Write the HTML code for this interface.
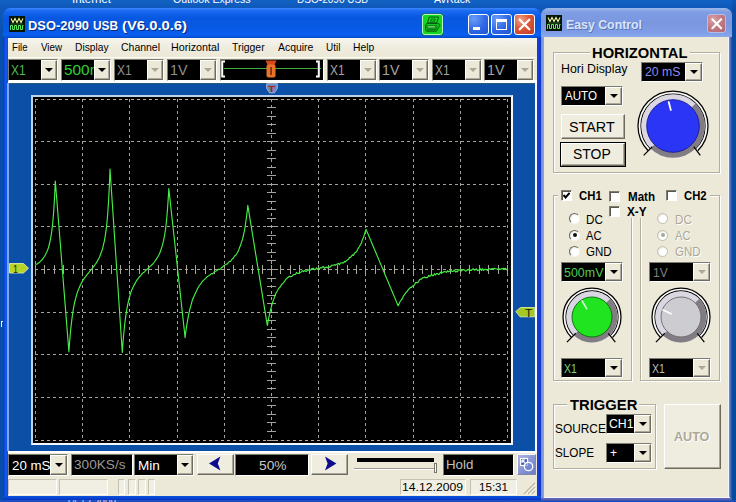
<!DOCTYPE html>
<html><head><meta charset="utf-8"><title>DSO-2090 USB</title>
<style>
html,body{margin:0;padding:0}
body{width:736px;height:502px;overflow:hidden;position:relative;background:#1b52c0;font-family:"Liberation Sans",sans-serif;}
.t{position:absolute;white-space:nowrap;transform-origin:0 50%;}

.cb{position:absolute;overflow:hidden;background:#000;box-sizing:border-box;border:1px solid;border-color:#7f7d70 #fff #fff #7f7d70;}
.cbb{position:absolute;right:0;top:0;bottom:0;background:#ece9d8;box-sizing:border-box;border:1px solid;border-color:#fff #6d6b60 #6d6b60 #fff;box-shadow:inset -1px -1px 0 #aca899;}
.arr{position:absolute;left:50%;top:50%;width:0;height:0;margin:-2px 0 0 -4px;border-left:4px solid transparent;border-right:4px solid transparent;border-top:4px solid #000;}
.arr.d{border-top-color:#aca899;}
.btn{position:absolute;background:#efede0;box-sizing:border-box;border:1px solid;border-color:#fff #6d6b60 #6d6b60 #fff;box-shadow:inset -1px -1px 0 #aca899;}
.grp{position:absolute;box-sizing:border-box;border:1px solid #b2af9e;box-shadow:inset 1px 1px 0 #fff, 1px 1px 0 #fff;}
.grp2{position:absolute;box-sizing:border-box;border:1px solid #d0d0bf;border-radius:3px;}
.chk{position:absolute;width:9px;height:9px;background:#fff;border:1px solid;border-color:#807e72 #fff #fff #807e72;box-shadow:inset 1px 1px 0 #5a584e;box-sizing:content-box;}
.rad{position:absolute;width:9px;height:9px;border-radius:50%;background:radial-gradient(circle at 60% 60%,#fff 45%,#d4d4c6);border:1px solid;border-color:#6a685e #f8f8f0 #f8f8f0 #6a685e;box-sizing:content-box;}
.rad.d{border-color:#c0c0b0;}
.sp{position:absolute;box-sizing:border-box;background:#f1efe4;border:1px solid;border-color:#c4c1b0 #fff #fff #c4c1b0;}

</style></head><body>
<div style="position:absolute;left:0px;top:0px;width:736px;height:502px;background:linear-gradient(#1262c4 0,#0e58b8 8px,#0850ac 40px,#084ea8 100%);"></div>
<span class="t " style="left:72.20px;top:-5.71px;font-size:11px;line-height:11px;color:#fff;transform:scaleX(1.0456);">Internet</span>
<span class="t " style="left:172.80px;top:-5.71px;font-size:11px;line-height:11px;color:#fff;transform:scaleX(0.9616);">Outlook Express</span>
<span class="t " style="left:296.80px;top:-6.31px;font-size:11px;line-height:11px;color:#fff;transform:scaleX(0.9144);">DSO-2090 USB</span>
<span class="t " style="left:434.30px;top:-6.11px;font-size:11px;line-height:11px;color:#fff;transform:scaleX(0.9602);">AvRack</span>
<div style="position:absolute;left:732px;top:0px;width:4px;height:502px;background:linear-gradient(#0e58b8 0,#0a4ca4 10px,#064a9e 100%);"></div>
<div style="position:absolute;left:0px;top:500px;width:736px;height:2px;background:#1a4fc2;"></div>
<span class="t " style="left:66.00px;top:497.54px;font-size:10px;line-height:10px;color:#c8d4f4;">14.12.2009</span>
<div style="position:absolute;left:1px;top:321px;width:1.2px;height:6px;background:#e8f0ff;"></div>
<div style="position:absolute;left:1px;top:321px;width:2.5px;height:1.2px;background:#e8f0ff;"></div>
<div style="position:absolute;left:3px;top:8px;width:538px;height:492px;background:#0a56e6;border-radius:8px 8px 0 0;"></div>
<div style="position:absolute;left:3px;top:8px;width:538px;height:30px;border-radius:8px 8px 0 0;background:linear-gradient(#3c88ff 0,#1868f0 3px,#0857e0 10px,#065ae6 22px,#0a5ff0 27px,#0349c8 30px);"></div>
<div style="position:absolute;left:3px;top:38px;width:5px;height:462px;background:linear-gradient(90deg,#0831d9,#1458ea 50%,#0a4fe0);"></div>
<div style="position:absolute;left:537px;top:38px;width:4px;height:462px;background:linear-gradient(90deg,#1440d4,#1234c8);"></div>
<div style="position:absolute;left:3px;top:496px;width:538px;height:4px;background:linear-gradient(#0855dd,#0a3fd0 60%,#0831c0);"></div>
<svg style="position:absolute;left:9px;top:16px" width="16" height="16" viewBox="0 0 16 16"><rect width="16" height="16" fill="#061406"/><path d="M2 2.5 L4 6.5 L6 2.5 L8 6.5 L10 2.5 L12 6.5 L14 2.5" stroke="#f4f8a0" stroke-width="1.1" fill="none"/><path d="M1.5 14 V9.5 H3.5 V13.5 H5.5 V9.5 H7.5 V13.5 H9.5 V9.5 H11.5 V13.5 H13.5 V9.5 H14.5" stroke="#58f058" stroke-width="1" fill="none"/><path d="M2 8 H14" stroke="#2a6a2a" stroke-width=".8"/></svg>
<span class="t " style="left:28.00px;top:18.57px;font-size:13.5px;line-height:13.5px;color:#fff;font-weight:bold;transform:scaleX(0.9564);text-shadow:1px 1px 0 #0a2a80;">DSO-2090</span>
<span class="t " style="left:93.40px;top:18.57px;font-size:13.5px;line-height:13.5px;color:#fff;font-weight:bold;transform:scaleX(0.8771);text-shadow:1px 1px 0 #0a2a80;">USB</span>
<span class="t " style="left:121.80px;top:18.57px;font-size:13.5px;line-height:13.5px;color:#fff;font-weight:bold;transform:scaleX(1.0966);text-shadow:1px 1px 0 #0a2a80;">(V6.0.0.6)</span>
<div style="position:absolute;left:421.5px;top:14px;width:21.5px;height:20.5px;background:#14d620;border:1px solid #b8f4c0;border-radius:3px;box-sizing:border-box;box-shadow:0 0 0 .6px #0c7a1a;"></div>
<svg style="position:absolute;left:421.5px;top:14px" width="21.6" height="20.5" viewBox="0 0 21.6 20.5"><g fill="none" stroke="#0a5a12" stroke-width="1"><path d="M7.3 3 H16.6 L14.8 8.8 H5.5 Z"/><path d="M9.3 5 H13.2 L12.6 7.2 H8.7 Z" stroke-width=".8"/><path d="M5 9.5 H15.5 Q18 9.5 18 11.5 Q18 13 16.5 13.5 L14.5 17.2 H4.8 Q3.4 16.8 3.6 15 V12 Q3.6 9.8 5 9.5 Z" fill="#12c41e"/><path d="M4.5 12 H15.5 M4.2 14 H15 M5 15.8 H14.4" stroke-width=".9"/><path d="M6 12.9 H13" stroke="#c8f8c8" stroke-width=".8"/></g></svg>
<div style="position:absolute;left:468px;top:14px;width:21px;height:21px;background:radial-gradient(circle at 25% 20%,#6c9cf8,#2f68e6 55%,#2254d0);border:1px solid #fff;border-radius:3px;box-sizing:border-box;"></div>
<div style="position:absolute;left:472.5px;top:26.5px;width:7.5px;height:3px;background:#fff;"></div>
<div style="position:absolute;left:491px;top:14px;width:21px;height:21px;background:radial-gradient(circle at 25% 20%,#6c9cf8,#2f68e6 55%,#2254d0);border:1px solid #fff;border-radius:3px;box-sizing:border-box;"></div>
<div style="position:absolute;left:496px;top:19px;width:11px;height:11px;box-sizing:border-box;border:1px solid #fff;border-top-width:3px;"></div>
<div style="position:absolute;left:514px;top:14px;width:21px;height:21px;background:radial-gradient(circle at 30% 25%,#f0a088,#dc5838 45%,#c23a20);border:1px solid #fff;border-radius:3px;box-sizing:border-box;"></div>
<svg style="position:absolute;left:514px;top:14px" width="21" height="21" viewBox="0 0 20 20"><path d="M5.5 5.5 L14.5 14.5 M14.5 5.5 L5.5 14.5" stroke="#fff" stroke-width="2.2" stroke-linecap="round"/></svg>
<div style="position:absolute;left:8px;top:38px;width:529px;height:21px;background:linear-gradient(#f6f5ee 0,#efecde 45%,#ebe8d7 100%);"></div>
<div style="position:absolute;left:8px;top:57px;width:529px;height:1.5px;background:#fdfdf8;"></div>
<span class="t " style="left:12.30px;top:41.69px;font-size:11px;line-height:11px;color:#000;transform:scaleX(0.8745);">File</span>
<span class="t " style="left:41.00px;top:41.69px;font-size:11px;line-height:11px;color:#000;transform:scaleX(0.8882);">View</span>
<span class="t " style="left:74.50px;top:41.69px;font-size:11px;line-height:11px;color:#000;transform:scaleX(0.9288);">Display</span>
<span class="t " style="left:120.50px;top:41.69px;font-size:11px;line-height:11px;color:#000;transform:scaleX(0.9518);">Channel</span>
<span class="t " style="left:171.00px;top:41.69px;font-size:11px;line-height:11px;color:#000;transform:scaleX(0.9754);">Horizontal</span>
<span class="t " style="left:232.30px;top:41.69px;font-size:11px;line-height:11px;color:#000;transform:scaleX(0.9468);">Trigger</span>
<span class="t " style="left:278.00px;top:41.69px;font-size:11px;line-height:11px;color:#000;transform:scaleX(0.9492);">Acquire</span>
<span class="t " style="left:326.00px;top:41.69px;font-size:11px;line-height:11px;color:#000;transform:scaleX(0.9063);">Util</span>
<span class="t " style="left:352.60px;top:41.69px;font-size:11px;line-height:11px;color:#000;transform:scaleX(0.9371);">Help</span>
<div style="position:absolute;left:8px;top:58px;width:529px;height:23px;background:#ece9d8;"></div>
<div style="position:absolute;left:8px;top:80px;width:529px;height:2.5px;background:#fff;"></div>
<div style="position:absolute;left:8px;top:82.5px;width:529px;height:1.5px;background:#2a5a78;"></div>
<div class="cb" style="left:7.5px;top:59px;width:50px;height:21.5px;background:#000"><span class="t " style="left:2.00px;top:2.73px;font-size:14.5px;line-height:14.5px;color:#4fb84f;transform:scaleX(0.8232);">X1</span><div class="cbb" style="width:16px"><div class="arr"></div></div></div>
<div class="cb" style="left:61px;top:59px;width:50px;height:21.5px;background:#000"><span class="t " style="left:2.00px;top:2.73px;font-size:14.5px;line-height:14.5px;color:#30d030;transform:scaleX(1.0615);">500m</span><div class="cbb" style="width:16px"><div class="arr"></div></div></div>
<div class="cb" style="left:114px;top:59px;width:50px;height:21.5px;background:#000"><span class="t " style="left:2.00px;top:2.73px;font-size:14.5px;line-height:14.5px;color:#909090;transform:scaleX(0.8232);">X1</span><div class="cbb" style="width:16px"><div class="arr d"></div></div></div>
<div class="cb" style="left:167px;top:59px;width:50px;height:21.5px;background:#000"><span class="t " style="left:2.00px;top:2.73px;font-size:14.5px;line-height:14.5px;color:#909090;transform:scaleX(0.9811);">1V</span><div class="cbb" style="width:16px"><div class="arr d"></div></div></div>
<div class="cb" style="left:326.5px;top:59px;width:50px;height:21.5px;background:#000"><span class="t " style="left:2.00px;top:2.73px;font-size:14.5px;line-height:14.5px;color:#a4a4a4;transform:scaleX(0.8232);">X1</span><div class="cbb" style="width:16px"><div class="arr d"></div></div></div>
<div class="cb" style="left:379.0px;top:59px;width:50px;height:21.5px;background:#000"><span class="t " style="left:2.00px;top:2.73px;font-size:14.5px;line-height:14.5px;color:#a4a4a4;transform:scaleX(0.9811);">1V</span><div class="cbb" style="width:16px"><div class="arr d"></div></div></div>
<div class="cb" style="left:431.5px;top:59px;width:50px;height:21.5px;background:#000"><span class="t " style="left:2.00px;top:2.73px;font-size:14.5px;line-height:14.5px;color:#a4a4a4;transform:scaleX(0.8232);">X1</span><div class="cbb" style="width:16px"><div class="arr d"></div></div></div>
<div class="cb" style="left:484.0px;top:59px;width:50px;height:21.5px;background:#000"><span class="t " style="left:2.00px;top:2.73px;font-size:14.5px;line-height:14.5px;color:#a4a4a4;transform:scaleX(0.9811);">1V</span><div class="cbb" style="width:16px"><div class="arr d"></div></div></div>
<div style="position:absolute;left:219.5px;top:59px;width:104.5px;height:21.5px;background:#000;box-sizing:border-box;border:1px solid;border-color:#7f7d70 #fff #fff #7f7d70;"></div>
<div style="position:absolute;left:224px;top:68px;width:97px;height:1px;background:#3fae3f;"></div>
<svg style="position:absolute;left:220px;top:59px" width="104" height="21" viewBox="0 0 104 21"><path d="M5 2.5 H2.2 V17.5 H5 M96 2.5 H98.8 V17.5 H96" stroke="#fff" stroke-width="2" fill="none"/><path d="M45.5 1.5 H56.5 L54.5 6 H47.5 Z" fill="#d84818"/><rect x="46.5" y="5.5" width="9" height="13" rx="2" fill="#e8742c"/><rect x="50.4" y="8" width="1.3" height="8" fill="#5a1804"/></svg>
<div style="position:absolute;left:8px;top:84px;width:529px;height:367px;background:#0c4fa6;"></div>
<div style="position:absolute;left:7px;top:83px;width:1.5px;height:368px;background:#7aa8e8;"></div>
<div style="position:absolute;left:535px;top:83px;width:2px;height:368px;background:#f4f8ff;"></div>
<svg style="position:absolute;left:266px;top:83px" width="12" height="10.5" viewBox="0 0 12 10.5"><path d="M.7 .7 H11.3 V5.5 L8.5 9.8 H3.5 L.7 5.5 Z" fill="#6a88c0" stroke="#a8bce0" stroke-width=".9"/></svg>
<span class="t " style="left:268.40px;top:83.96px;font-size:9.5px;line-height:9.5px;color:#b02408;font-weight:bold;transform:scaleX(1.2409);">T</span>
<svg style="position:absolute;left:8.5px;top:263px" width="21" height="11" viewBox="0 0 21 11"><path d="M.5 .5 H14.5 L19.5 5.2 L14.5 10 H.5 Z" fill="#b8d428" stroke="#dcecA0" stroke-width=".9"/></svg>
<span class="t " style="left:12.60px;top:263.71px;font-size:10.5px;line-height:10.5px;color:#1a2a00;transform:scaleX(0.8563);">1</span>
<svg style="position:absolute;left:515px;top:307px" width="20" height="11" viewBox="0 0 20 11"><path d="M19.8 .5 H5.5 L.8 4.5 L5 9.8 H19.8 Z" fill="#a4c824" stroke="#d8e8a0" stroke-width=".9"/></svg>
<span class="t " style="left:524.80px;top:307.71px;font-size:10.5px;line-height:10.5px;color:#141c00;transform:scaleX(1.1539);">T</span>
<div style="position:absolute;left:31px;top:95px;width:482px;height:350px;background:#000;border:2px solid;border-color:#bcd4ec #f4f8ff #f4f8ff #bcd4ec;box-sizing:border-box;"></div>
<svg style="position:absolute;left:35px;top:99px" width="473" height="342" viewBox="0 0 473 342"><path d="M0 0.5 H473 M0 341.5 H473" stroke="#c0ac94" stroke-width="1" stroke-dasharray="3 3" fill="none" shape-rendering="crispEdges"/><path d="M0.5 0 V342 M47.5 0 V342 M94.5 0 V342 M142.5 0 V342 M189.5 0 V342 M236.5 0 V342 M283.5 0 V342 M330.5 0 V342 M378.5 0 V342 M425.5 0 V342 M472.5 0 V342 M0 42.5 H473 M0 85.5 H473 M0 127.5 H473 M0 170.5 H473 M0 213.5 H473 M0 255.5 H473 M0 298.5 H473" stroke="#a4a298" stroke-width="1" stroke-dasharray="3 3" fill="none" shape-rendering="crispEdges"/><path d="M232.0 0.5 H241.0 M232.0 8.5 H241.0 M232.0 17.5 H241.0 M232.0 25.5 H241.0 M232.0 34.5 H241.0 M232.0 42.5 H241.0 M232.0 51.5 H241.0 M232.0 59.5 H241.0 M232.0 68.5 H241.0 M232.0 76.5 H241.0 M232.0 85.5 H241.0 M232.0 93.5 H241.0 M232.0 102.5 H241.0 M232.0 110.5 H241.0 M232.0 119.5 H241.0 M232.0 127.5 H241.0 M232.0 136.5 H241.0 M232.0 144.5 H241.0 M232.0 153.5 H241.0 M232.0 161.5 H241.0 M232.0 170.5 H241.0 M232.0 179.5 H241.0 M232.0 187.5 H241.0 M232.0 196.5 H241.0 M232.0 204.5 H241.0 M232.0 213.5 H241.0 M232.0 221.5 H241.0 M232.0 230.5 H241.0 M232.0 238.5 H241.0 M232.0 247.5 H241.0 M232.0 255.5 H241.0 M232.0 264.5 H241.0 M232.0 272.5 H241.0 M232.0 281.5 H241.0 M232.0 289.5 H241.0 M232.0 298.5 H241.0 M232.0 306.5 H241.0 M232.0 315.5 H241.0 M232.0 323.5 H241.0 M232.0 332.5 H241.0 M232.0 341.5 H241.0 M0.5 166.0 V175.0 M9.5 166.0 V175.0 M19.5 166.0 V175.0 M28.5 166.0 V175.0 M38.5 166.0 V175.0 M47.5 166.0 V175.0 M57.5 166.0 V175.0 M66.5 166.0 V175.0 M76.5 166.0 V175.0 M85.5 166.0 V175.0 M94.5 166.0 V175.0 M104.5 166.0 V175.0 M113.5 166.0 V175.0 M123.5 166.0 V175.0 M132.5 166.0 V175.0 M142.5 166.0 V175.0 M151.5 166.0 V175.0 M160.5 166.0 V175.0 M170.5 166.0 V175.0 M179.5 166.0 V175.0 M189.5 166.0 V175.0 M198.5 166.0 V175.0 M208.5 166.0 V175.0 M217.5 166.0 V175.0 M227.5 166.0 V175.0 M236.5 166.0 V175.0 M245.5 166.0 V175.0 M255.5 166.0 V175.0 M264.5 166.0 V175.0 M274.5 166.0 V175.0 M283.5 166.0 V175.0 M293.5 166.0 V175.0 M302.5 166.0 V175.0 M312.5 166.0 V175.0 M321.5 166.0 V175.0 M330.5 166.0 V175.0 M340.5 166.0 V175.0 M349.5 166.0 V175.0 M359.5 166.0 V175.0 M368.5 166.0 V175.0 M378.5 166.0 V175.0 M387.5 166.0 V175.0 M396.5 166.0 V175.0 M406.5 166.0 V175.0 M415.5 166.0 V175.0 M425.5 166.0 V175.0 M434.5 166.0 V175.0 M444.5 166.0 V175.0 M453.5 166.0 V175.0 M463.5 166.0 V175.0 M472.5 166.0 V175.0" stroke="#a8a698" stroke-width="1" fill="none" shape-rendering="crispEdges"/><polyline points="0.5,165.8 1.5,165.2 2.5,164.8 3.5,163.8 4.5,163.3 5.5,162.3 6.5,161.2 7.5,160.3 8.5,158.7 9.5,157.5 10.5,155.5 11.5,153.5 12.5,151.3 13.5,148.6 14.5,144.5 15.5,140.0 16.5,134.2 17.5,126.4 18.5,115.1 19.5,99.3 20.3,82.0 20.5,84.5 21.5,97.1 22.5,109.6 23.5,122.2 24.5,134.7 25.5,147.3 26.5,159.9 27.5,172.4 28.5,185.0 29.5,197.5 30.5,210.1 31.5,222.7 32.5,235.2 33.5,247.8 33.9,252.8 34.5,244.4 35.5,232.3 36.5,223.4 37.5,215.5 38.5,209.2 39.5,204.0 40.5,199.8 41.5,196.4 42.5,192.9 43.5,190.4 44.5,188.0 45.5,185.7 46.5,183.9 47.5,181.9 48.5,180.3 49.5,178.9 50.5,177.8 51.5,176.4 52.5,175.1 53.5,174.0 54.5,172.7 55.5,171.4 56.5,170.5 57.5,169.2 58.5,167.6 59.5,166.5 60.5,165.0 61.5,163.7 62.5,161.9 63.5,159.8 64.5,158.2 65.5,155.3 66.5,152.8 67.5,149.9 68.5,145.7 69.5,141.3 70.5,135.2 71.5,127.9 72.5,117.7 73.5,103.4 74.5,83.5 75.0,70.0 75.5,77.5 76.5,92.4 77.5,107.3 78.5,122.2 79.5,137.1 80.5,152.0 81.5,166.9 82.5,181.8 83.5,196.7 84.5,211.7 85.5,226.6 86.5,241.5 87.3,253.4 87.5,250.0 88.5,237.5 89.5,227.2 90.5,218.9 91.5,212.1 92.5,206.7 93.5,202.2 94.5,198.0 95.5,194.7 96.5,191.5 97.5,189.4 98.5,187.2 99.5,185.4 100.5,183.6 101.5,181.7 102.5,180.3 103.5,179.2 104.5,177.6 105.5,176.7 106.5,175.5 107.5,174.4 108.5,173.4 109.5,172.9 110.5,171.6 111.5,170.8 112.5,169.9 113.5,169.3 114.5,167.9 115.5,167.1 116.5,166.2 117.5,165.3 118.5,164.2 119.5,163.0 120.5,161.3 121.5,159.9 122.5,158.3 123.5,156.8 124.5,154.8 125.5,152.0 126.5,149.2 127.5,145.9 128.5,141.9 129.5,136.9 130.5,130.5 131.5,121.8 132.5,110.3 133.5,95.1 133.8,89.5 134.5,95.9 135.5,105.1 136.5,114.2 137.5,123.3 138.5,132.5 139.5,141.6 140.5,150.8 141.5,159.9 142.5,169.1 143.5,178.2 144.5,187.4 145.5,196.5 146.5,205.7 147.5,214.8 148.5,224.0 149.5,233.1 150.1,238.6 150.5,234.9 151.5,227.8 152.5,221.9 153.5,216.4 154.5,211.7 155.5,207.8 156.5,204.3 157.5,200.4 158.5,198.6 159.5,196.0 160.5,193.9 161.5,191.9 162.5,189.6 163.5,188.0 164.5,186.1 165.5,185.4 166.5,183.5 167.5,182.3 168.5,181.4 169.5,180.4 170.5,179.6 171.5,178.4 172.5,177.5 173.5,176.9 174.5,176.1 175.5,175.7 176.5,174.5 177.5,174.9 178.5,173.9 179.5,172.7 180.5,172.2 181.5,171.7 182.5,171.1 183.5,170.2 184.5,170.4 185.5,170.0 186.5,168.7 187.5,168.1 188.5,166.9 189.5,166.3 190.5,165.8 191.5,165.0 192.5,164.9 193.5,163.3 194.5,162.3 195.5,162.5 196.5,161.0 197.5,159.5 198.5,158.9 199.5,157.0 200.5,156.3 201.5,155.3 202.5,153.5 203.5,151.4 204.5,148.7 205.5,146.3 206.5,143.1 207.5,140.4 208.5,136.0 209.5,131.5 210.5,125.0 211.5,117.8 212.5,109.8 212.8,106.4 213.5,110.7 214.5,116.9 215.5,123.0 216.5,129.2 217.5,135.3 218.5,141.5 219.5,147.6 220.5,153.8 221.5,159.9 222.5,166.1 223.5,172.2 224.5,178.4 225.5,184.6 226.5,190.7 227.5,196.9 228.5,203.0 229.5,209.2 230.5,215.3 231.5,221.5 232.3,226.4 232.5,225.7 233.5,220.1 234.5,215.4 235.5,211.2 236.5,207.4 237.5,203.5 238.5,200.9 239.5,198.1 240.5,195.3 241.5,193.2 242.5,191.5 243.5,189.7 244.5,188.6 245.5,187.5 246.5,185.5 247.5,184.8 248.5,183.7 249.5,182.7 250.5,180.8 251.5,179.6 252.5,178.8 253.5,178.0 254.5,177.3 255.5,177.6 256.5,177.6 257.5,176.9 258.5,175.6 259.5,175.5 260.5,175.4 261.5,173.4 262.5,174.3 263.5,174.5 264.5,173.9 265.5,173.5 266.5,172.6 267.5,171.6 268.5,172.7 269.5,171.5 270.5,172.3 271.5,172.4 272.5,171.0 273.5,170.8 274.5,171.8 275.5,171.1 276.5,169.7 277.5,169.5 278.5,169.3 279.5,170.8 280.5,170.5 281.5,168.9 282.5,170.2 283.5,170.4 284.5,169.5 285.5,168.7 286.5,169.0 287.5,167.9 288.5,167.5 289.5,169.4 290.5,168.5 291.5,168.1 292.5,168.8 293.5,167.5 294.5,168.2 295.5,167.9 296.5,166.4 297.5,166.2 298.5,166.1 299.5,165.7 300.5,166.2 301.5,165.2 302.5,165.2 303.5,164.3 304.5,165.6 305.5,164.0 306.5,163.9 307.5,163.7 308.5,164.0 309.5,162.4 310.5,163.0 311.5,161.5 312.5,160.9 313.5,160.2 314.5,158.4 315.5,158.5 316.5,157.1 317.5,155.8 318.5,156.5 319.5,154.0 320.5,153.5 321.5,152.7 322.5,150.9 323.5,148.8 324.5,147.5 325.5,145.6 326.5,144.0 327.5,140.2 328.5,138.6 329.5,135.1 330.5,132.0 331.1,130.4 331.5,131.4 332.5,133.7 333.5,136.1 334.5,138.5 335.5,140.9 336.5,143.3 337.5,145.7 338.5,148.0 339.5,150.4 340.5,152.8 341.5,155.2 342.5,157.6 343.5,160.0 344.5,162.4 345.5,164.7 346.5,167.1 347.5,169.5 348.5,171.9 349.5,174.3 350.5,176.7 351.5,179.0 352.5,181.4 353.5,183.8 354.5,186.2 355.5,188.6 356.5,191.0 357.5,193.3 358.5,195.7 359.5,198.1 360.5,200.5 361.5,202.9 362.5,205.3 363.1,206.7 363.5,206.4 364.5,203.8 365.5,202.0 366.5,200.7 367.5,199.4 368.5,196.8 369.5,195.7 370.5,194.1 371.5,192.9 372.5,192.0 373.5,190.4 374.5,189.5 375.5,188.4 376.5,188.4 377.5,187.0 378.5,186.5 379.5,185.9 380.5,183.6 381.5,183.5 382.5,183.7 383.5,182.8 384.5,180.7 385.5,180.1 386.5,180.2 387.5,178.9 388.5,178.7 389.5,177.9 390.5,178.8 391.5,178.6 392.5,178.5 393.5,176.4 394.5,177.3 395.5,176.9 396.5,175.4 397.5,176.7 398.5,176.6 399.5,174.7 400.5,176.0 401.5,174.6 402.5,174.5 403.5,175.4 404.5,174.9 405.5,173.2 406.5,173.6 407.5,173.6 408.5,173.0 409.5,172.5 410.5,172.7 411.5,173.4 412.5,171.7 413.5,172.8 414.5,172.4 415.5,171.3 416.5,171.9 417.5,172.5 418.5,172.1 419.5,171.0 420.5,173.0 421.5,172.4 422.5,172.8 423.5,170.8 424.5,171.1 425.5,170.5 426.5,172.0 427.5,170.9 428.5,170.5 429.5,171.1 430.5,172.1 431.5,171.8 432.5,170.6 433.5,170.3 434.5,171.9 435.5,171.1 436.5,171.4 437.5,170.0 438.5,169.9 439.5,171.2 440.5,170.6 441.5,169.8 442.5,171.7 443.5,171.0 444.5,171.3 445.5,169.7 446.5,171.4 447.5,169.7 448.5,171.4 449.5,170.5 450.5,170.2 451.5,170.6 452.5,171.5 453.5,170.0 454.5,169.7 455.5,170.5 456.5,169.9 457.5,169.6 458.5,169.7 459.5,169.4 460.5,169.7 461.5,170.0 462.5,170.0 463.5,170.9 464.5,169.9 465.5,170.4 466.5,169.6 467.5,170.0 468.5,169.3 469.5,169.8 470.5,169.3 471.5,170.8 472.5,170.4" stroke="#46ee46" stroke-width="1.15" fill="none" stroke-linejoin="round"/></svg>
<div style="position:absolute;left:8px;top:451px;width:529px;height:27px;background:#ece9d8;"></div>
<div style="position:absolute;left:8px;top:451px;width:529px;height:2px;background:#fff;"></div>
<div class="cb" style="left:7.5px;top:454px;width:60.5px;height:21.5px;background:#000"><span class="t " style="left:3.00px;top:3.60px;font-size:13px;line-height:13px;color:#fff;transform:scaleX(1.0248);">20 mS</span><div class="cbb" style="width:17px"><div class="arr"></div></div></div>
<div style="position:absolute;left:71px;top:454px;width:61.5px;height:21.5px;background:#000;box-sizing:border-box;border:1px solid;border-color:#7f7d70 #fff #fff #7f7d70;"></div>
<span class="t " style="left:73.80px;top:458.20px;font-size:13px;line-height:13px;color:#9a9a9a;transform:scaleX(1.0480);">300KS/s</span>
<div class="cb" style="left:134px;top:454px;width:60px;height:21.5px;background:#000"><span class="t " style="left:2.50px;top:3.50px;font-size:13px;line-height:13px;color:#fff;transform:scaleX(1.0408);">Min</span><div class="cbb" style="width:16px"><div class="arr"></div></div></div>
<div class="btn" style="left:196.5px;top:454px;width:37px;height:20.5px"></div>
<svg style="position:absolute;left:205px;top:455px" width="20" height="18" viewBox="205 455 20 18"><path d="M209 463.6 L220.4 456.6 L217.8 463.6 L220.4 470.6 Z" fill="#0c0c8c"/></svg>
<div style="position:absolute;left:235px;top:454px;width:73.5px;height:21.5px;background:#000;box-sizing:border-box;border:1px solid;border-color:#7f7d70 #fff #fff #7f7d70;"></div>
<span class="t " style="left:258.60px;top:458.50px;font-size:13px;line-height:13px;color:#c8c8c8;transform:scaleX(1.0569);">50%</span>
<div class="btn" style="left:310.5px;top:454px;width:37px;height:20.5px"></div>
<svg style="position:absolute;left:320px;top:455px" width="20" height="18" viewBox="320 455 20 18"><path d="M336.4 463.6 L325 456.6 L327.6 463.6 L325 470.6 Z" fill="#0c0c8c"/></svg>
<div style="position:absolute;left:357px;top:458px;width:76.5px;height:4px;background:#000;"></div>
<div style="position:absolute;left:354px;top:467.5px;width:80px;height:1.5px;background:#9c9a8c;"></div>
<div style="position:absolute;left:354px;top:469px;width:80px;height:1px;background:#fff;"></div>
<div style="position:absolute;left:433.5px;top:462.5px;width:3px;height:10.5px;background:#f8f8f0;border:1px solid #7a786a;box-sizing:border-box;"></div>
<div style="position:absolute;left:443px;top:454px;width:71px;height:21.5px;background:#000;box-sizing:border-box;border:1px solid;border-color:#7f7d70 #fff #fff #7f7d70;"></div>
<span class="t " style="left:445.60px;top:458.20px;font-size:13px;line-height:13px;color:#c0c0c0;transform:scaleX(1.0211);">Hold</span>
<div style="position:absolute;left:517px;top:454px;width:19px;height:21px;background:linear-gradient(135deg,#aab4e0,#6a7ac8);border:1px solid;border-color:#fff #8088a8 #8088a8 #fff;box-sizing:border-box;"></div>
<svg style="position:absolute;left:518px;top:455px" width="17" height="19" viewBox="0 0 17 19"><rect x="2.5" y="3.5" width="7" height="7" fill="#4a60c0" stroke="#fff" stroke-width="1.2"/><circle cx="10.5" cy="11.5" r="4.2" fill="#6a80d0" fill-opacity=".6" stroke="#fff" stroke-width="1.3"/><path d="M4 5 L8 9 M4 5 H7 M4 5 V8" stroke="#fff" stroke-width="1.1" fill="none"/></svg>
<div style="position:absolute;left:8px;top:478px;width:529px;height:18px;background:#ece9d8;"></div>
<div class="sp" style="left:8px;top:479px;width:49px;height:16px"></div>
<div class="sp" style="left:59px;top:479px;width:49px;height:16px"></div>
<div class="sp" style="left:118px;top:479px;width:7px;height:16px"></div>
<div class="sp" style="left:128px;top:479px;width:8px;height:16px"></div>
<div class="sp" style="left:138px;top:479px;width:8px;height:16px"></div>
<div class="sp" style="left:148px;top:479px;width:7px;height:16px"></div>
<div class="sp" style="left:400px;top:479px;width:66px;height:16px"></div>
<div class="sp" style="left:470px;top:479px;width:47px;height:16px"></div>
<span class="t " style="left:402.00px;top:482.27px;font-size:11.5px;line-height:11.5px;color:#000;transform:scaleX(1.0599);">14.12.2009</span>
<span class="t " style="left:479.00px;top:482.27px;font-size:11.5px;line-height:11.5px;color:#000;transform:scaleX(1.0078);">15:31</span>
<svg style="position:absolute;left:523px;top:482px" width="13" height="13" viewBox="0 0 13 13"><path d="M12 1 L1 12 M12 5 L5 12 M12 9 L9 12" stroke="#b8b4a0" stroke-width="1.3"/><path d="M12.8 2 L2 12.8 M12.8 6 L6 12.8 M12.8 10 L10 12.8" stroke="#fff" stroke-width=".8"/></svg>
<div style="position:absolute;left:541px;top:8px;width:191px;height:494px;background:#7a96df;border-radius:8px 8px 0 0;"></div>
<div style="position:absolute;left:541px;top:8px;width:191px;height:29px;border-radius:8px 8px 0 0;background:linear-gradient(#9db9eb 0,#7f9de3 4px,#7a96df 14px,#7f9de6 24px,#8aa8ea 29px);"></div>
<div style="position:absolute;left:541px;top:37px;width:3px;height:465px;background:linear-gradient(90deg,#6f8cd8,#8aa6e8);"></div>
<div style="position:absolute;left:728px;top:37px;width:1px;height:461px;background:#f4f2fc;"></div>
<div style="position:absolute;left:729px;top:37px;width:3px;height:465px;background:linear-gradient(90deg,#8890cc,#4668b8 55%,#2048a4);"></div>
<div style="position:absolute;left:544px;top:37px;width:184px;height:460px;background:#ece9d8;"></div>
<div style="position:absolute;left:544px;top:497px;width:186px;height:1px;background:#f4f2fc;"></div>
<div style="position:absolute;left:541px;top:498px;width:191px;height:3px;background:linear-gradient(#6a70bc,#3c4aa8);"></div>
<div style="position:absolute;left:541px;top:501px;width:191px;height:1px;background:#0c50c0;"></div>
<svg style="position:absolute;left:546px;top:15px" width="16" height="16" viewBox="0 0 16 16"><rect width="16" height="16" fill="#061406"/><path d="M2 2.5 L4 6.5 L6 2.5 L8 6.5 L10 2.5 L12 6.5 L14 2.5" stroke="#f4f8a0" stroke-width="1.1" fill="none"/><path d="M1.5 14 V9.5 H3.5 V13.5 H5.5 V9.5 H7.5 V13.5 H9.5 V9.5 H11.5 V13.5 H13.5 V9.5 H14.5" stroke="#58f058" stroke-width="1" fill="none"/><path d="M2 8 H14" stroke="#2a6a2a" stroke-width=".8"/></svg>
<span class="t " style="left:566.00px;top:18.00px;font-size:13px;line-height:13px;color:#d8e4f8;font-weight:bold;transform:scaleX(0.9479);text-shadow:1px 1px 0 #5a74b8;">Easy Control</span>
<div style="position:absolute;left:706.5px;top:13.5px;width:19.5px;height:19.5px;background:radial-gradient(circle at 30% 25%,#d8a0a8,#c27880 50%,#b06870);border:1px solid #b4bcec;border-radius:3px;box-sizing:border-box;"></div>
<svg style="position:absolute;left:706.5px;top:13.5px" width="19.5" height="19.5" viewBox="0 0 20 20"><path d="M5.5 5.5 L14.5 14.5 M14.5 5.5 L5.5 14.5" stroke="#fff" stroke-width="2.2" stroke-linecap="round"/></svg>
<div class="grp" style="left:553px;top:52px;width:167px;height:121px"></div>
<div style="position:absolute;left:590px;top:44px;width:100px;height:16px;background:#ece9d8;"></div>
<span class="t " style="left:592.20px;top:45.95px;font-size:14px;line-height:14px;color:#000;font-weight:bold;transform:scaleX(1.0526);">HORIZONTAL</span>
<span class="t " style="left:560.80px;top:62.84px;font-size:12px;line-height:12px;color:#000;transform:scaleX(1.0281);">Hori Display</span>
<div class="cb" style="left:641px;top:62px;width:62px;height:20px;background:#000"><span class="t " style="left:3.00px;top:3.44px;font-size:12px;line-height:12px;color:#8c8cf0;transform:scaleX(1.0236);">20 mS</span><div class="cbb" style="width:17px"><div class="arr"></div></div></div>
<div class="cb" style="left:561px;top:86px;width:62px;height:20px;background:#000"><span class="t " style="left:2.50px;top:3.34px;font-size:12px;line-height:12px;color:#fff;transform:scaleX(0.9663);">AUTO</span><div class="cbb" style="width:17px"><div class="arr"></div></div></div>
<div class="btn" style="left:561px;top:114px;width:64px;height:25px"></div>
<span class="t " style="left:569.00px;top:119.65px;font-size:14px;line-height:14px;color:#000;transform:scaleX(1.0247);">START</span>
<div style="position:absolute;left:560px;top:142px;width:66px;height:25px;background:#000;"></div>
<div class="btn" style="left:561px;top:143px;width:64px;height:23px"></div>
<span class="t " style="left:573.40px;top:147.15px;font-size:14px;line-height:14px;color:#000;transform:scaleX(0.9957);">STOP</span>
<svg style="position:absolute;left:629.5px;top:82.5px" width="86" height="86" viewBox="-43 -43 86 86"><path d="M-23.69 23.69 A33.5 33.5 0 1 1 23.69 23.69" stroke="#fbfbf8" stroke-width="3" fill="none"/><path d="M-24.75 24.75 A35 35 0 1 1 24.75 24.75" stroke="#000" stroke-width="1.25" fill="none"/><path d="M-22.63 22.63 A32 32 0 1 1 22.63 22.63" stroke="#000" stroke-width="1.25" fill="none"/><circle r="31.8" fill="#dad6e2"/><path d="M22.49 -22.49 A31.8 31.8 0 0 1 -22.49 22.49 Z" fill="#827c84"/><path d="M-20.72 20.72 L-29.34 29.34 M20.72 20.72 L27.29 29.34" stroke="#000" stroke-width="1.2"/><circle r="26.3" fill="#2b35f5" stroke="#1a1a90" stroke-width=".9"/><path d="M-4.30 -24.00 L-2.20 -16.00" stroke="#fff" stroke-width="1.8" stroke-linecap="round"/></svg>
<div class="grp" style="left:553px;top:194.5px;width:79px;height:186.5px"></div>
<div class="grp" style="left:640px;top:194.5px;width:80px;height:186.5px"></div>
<div style="position:absolute;left:558px;top:188px;width:48px;height:14px;background:#ece9d8;"></div>
<div style="position:absolute;left:606px;top:188px;width:58px;height:14px;background:#ece9d8;"></div>
<div style="position:absolute;left:606px;top:200px;width:46px;height:18px;background:#ece9d8;"></div>
<div style="position:absolute;left:662px;top:188px;width:48px;height:14px;background:#ece9d8;"></div>
<div class="chk" style="left:560.5px;top:189.5px;"></div>
<svg style="position:absolute;left:561.5px;top:190.5px" width="9" height="9" viewBox="0 0 9 9"><path d="M1.5 4 L3.6 6.5 L7.6 1.8" stroke="#000" stroke-width="2" fill="none"/></svg>
<span class="t " style="left:579.00px;top:189.52px;font-size:12.5px;line-height:12.5px;color:#000;font-weight:bold;transform:scaleX(0.9078);">CH1</span>
<div class="chk" style="left:608.8px;top:190.6px;"></div>
<span class="t " style="left:627.90px;top:191.34px;font-size:12px;line-height:12px;color:#000;font-weight:bold;transform:scaleX(0.9645);">Math</span>
<div class="chk" style="left:609px;top:205.5px;"></div>
<span class="t " style="left:627.40px;top:205.64px;font-size:12px;line-height:12px;color:#000;font-weight:bold;transform:scaleX(0.9798);">X-Y</span>
<div class="chk" style="left:665.5px;top:190px;"></div>
<span class="t " style="left:683.90px;top:189.72px;font-size:12.5px;line-height:12.5px;color:#000;font-weight:bold;transform:scaleX(0.9038);">CH2</span>
<div class="rad" style="left:569.1px;top:213.4px"></div>
<span class="t " style="left:586.00px;top:213.64px;font-size:12px;line-height:12px;color:#000;transform:scaleX(0.9693);">DC</span>
<div class="rad d" style="left:657.0px;top:213.4px"></div>
<span class="t " style="left:675.60px;top:214.94px;font-size:12px;line-height:12px;color:#fff;transform:scaleX(0.9693);">DC</span>
<span class="t " style="left:674.60px;top:213.94px;font-size:12px;line-height:12px;color:#aca899;transform:scaleX(0.9693);">DC</span>
<div class="rad" style="left:569.1px;top:229.5px"></div>
<div style="position:absolute;left:572.6px;top:233.0px;width:4px;height:4px;background:#111;border-radius:50%;"></div>
<span class="t " style="left:586.00px;top:229.74px;font-size:12px;line-height:12px;color:#000;transform:scaleX(0.9298);">AC</span>
<div class="rad d" style="left:657.0px;top:229.5px"></div>
<div style="position:absolute;left:660.5px;top:233.0px;width:4px;height:4px;background:#a8a898;border-radius:50%;"></div>
<span class="t " style="left:675.60px;top:231.04px;font-size:12px;line-height:12px;color:#fff;transform:scaleX(0.9298);">AC</span>
<span class="t " style="left:674.60px;top:230.04px;font-size:12px;line-height:12px;color:#aca899;transform:scaleX(0.9298);">AC</span>
<div class="rad" style="left:569.1px;top:245.60000000000002px"></div>
<span class="t " style="left:586.00px;top:245.84px;font-size:12px;line-height:12px;color:#000;transform:scaleX(0.9600);">GND</span>
<div class="rad d" style="left:657.0px;top:245.60000000000002px"></div>
<span class="t " style="left:675.60px;top:247.14px;font-size:12px;line-height:12px;color:#fff;transform:scaleX(0.9600);">GND</span>
<span class="t " style="left:674.60px;top:246.14px;font-size:12px;line-height:12px;color:#aca899;transform:scaleX(0.9600);">GND</span>
<div class="cb" style="left:561px;top:262px;width:62px;height:20px;background:#000"><span class="t " style="left:2.00px;top:3.64px;font-size:12px;line-height:12px;color:#52cc52;transform:scaleX(1.0389);">500mV</span><div class="cbb" style="width:17px"><div class="arr"></div></div></div>
<div class="cb" style="left:649px;top:262px;width:62px;height:20px;background:#000"><span class="t " style="left:3.00px;top:3.64px;font-size:12px;line-height:12px;color:#808080;">1V</span><div class="cbb" style="width:17px"><div class="arr d"></div></div></div>
<svg style="position:absolute;left:555.4px;top:280.2px" width="74" height="74" viewBox="-37 -37 74 74"><path d="M-19.45 19.45 A27.5 27.5 0 1 1 19.45 19.45" stroke="#fbfbf8" stroke-width="3" fill="none"/><path d="M-20.51 20.51 A29 29 0 1 1 20.51 20.51" stroke="#000" stroke-width="1.25" fill="none"/><path d="M-18.38 18.38 A26 26 0 1 1 18.38 18.38" stroke="#000" stroke-width="1.25" fill="none"/><circle r="25.8" fill="#dad6e2"/><path d="M18.24 -18.24 A25.8 25.8 0 0 1 -18.24 18.24 Z" fill="#827c84"/><path d="M-16.26 16.26 L-25.10 25.10 M16.26 16.26 L23.35 25.10" stroke="#000" stroke-width="1.2"/><circle r="20" fill="#20e420" stroke="#0a6a0a" stroke-width=".9"/><path d="M-9.80 -16.00 L-5.40 -8.40" stroke="#c8ffc8" stroke-width="1.8" stroke-linecap="round"/></svg>
<svg style="position:absolute;left:644px;top:280.2px" width="74" height="74" viewBox="-37 -37 74 74"><path d="M-19.45 19.45 A27.5 27.5 0 1 1 19.45 19.45" stroke="#fbfbf8" stroke-width="3" fill="none"/><path d="M-20.51 20.51 A29 29 0 1 1 20.51 20.51" stroke="#000" stroke-width="1.25" fill="none"/><path d="M-18.38 18.38 A26 26 0 1 1 18.38 18.38" stroke="#000" stroke-width="1.25" fill="none"/><circle r="25.8" fill="#dad6e2"/><path d="M18.24 -18.24 A25.8 25.8 0 0 1 -18.24 18.24 Z" fill="#827c84"/><path d="M-16.26 16.26 L-25.10 25.10 M16.26 16.26 L23.35 25.10" stroke="#000" stroke-width="1.2"/><circle r="20" fill="#cdcdd1" stroke="#6a6a6a" stroke-width=".9"/><path d="M-17.80 -7.00 L-10.00 -3.20" stroke="#fff" stroke-width="1.8" stroke-linecap="round"/></svg>
<div class="cb" style="left:561px;top:358px;width:62px;height:20px;background:#000"><span class="t " style="left:2.00px;top:3.37px;font-size:13.5px;line-height:13.5px;color:#7ed27e;transform:scaleX(0.7752);">X1</span><div class="cbb" style="width:17px"><div class="arr"></div></div></div>
<div class="cb" style="left:649px;top:358px;width:62px;height:20px;background:#000"><span class="t " style="left:2.00px;top:3.37px;font-size:13.5px;line-height:13.5px;color:#bcbcbc;transform:scaleX(0.7752);">X1</span><div class="cbb" style="width:17px"><div class="arr d"></div></div></div>
<div class="grp" style="left:553px;top:404px;width:103px;height:65px"></div>
<div style="position:absolute;left:567px;top:398px;width:72px;height:14px;background:#ece9d8;"></div>
<span class="t " style="left:569.60px;top:398.15px;font-size:14px;line-height:14px;color:#000;font-weight:bold;transform:scaleX(1.0552);">TRIGGER</span>
<span class="t " style="left:554.50px;top:423.14px;font-size:12px;line-height:12px;color:#000;transform:scaleX(0.9895);">SOURCE</span>
<div class="cb" style="left:606px;top:414px;width:46px;height:20px;background:#000"><span class="t " style="left:2.00px;top:3.34px;font-size:12px;line-height:12px;color:#fff;transform:scaleX(1.0206);">CH1</span><div class="cbb" style="width:17px"><div class="arr"></div></div></div>
<span class="t " style="left:554.50px;top:446.84px;font-size:12px;line-height:12px;color:#000;transform:scaleX(0.9745);">SLOPE</span>
<div class="cb" style="left:606px;top:443px;width:46px;height:20px;background:#000"><span class="t " style="left:3.00px;top:2.84px;font-size:12px;line-height:12px;color:#fff;">+</span><div class="cbb" style="width:17px"><div class="arr"></div></div></div>
<div class="btn" style="left:664px;top:404px;width:57px;height:65px"></div>
<span class="t " style="left:675.40px;top:430.80px;font-size:13px;line-height:13px;color:#fff;font-weight:bold;transform:scaleX(0.9674);">AUTO</span>
<span class="t " style="left:674.40px;top:429.80px;font-size:13px;line-height:13px;color:#aca899;font-weight:bold;transform:scaleX(0.9674);">AUTO</span>
</body></html>
